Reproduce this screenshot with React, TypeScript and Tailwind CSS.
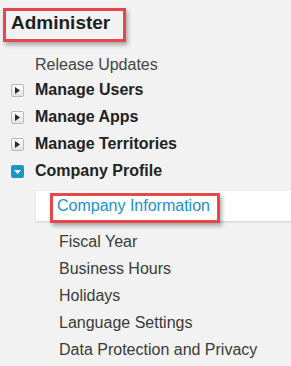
import React from "react";

const groups = ["Manage Users", "Manage Apps", "Manage Territories"];
const subItems = [
  "Fiscal Year",
  "Business Hours",
  "Holidays",
  "Language Settings",
  "Data Protection and Privacy",
];

const CollapsedIcon = () => (
  <span className="mt-[2px] flex h-[13px] w-[13px] shrink-0 items-center justify-center rounded-[2px] border border-[#b9b9b9] bg-gradient-to-b from-white to-[#e2e2e2]">
    <svg width="5" height="7" viewBox="0 0 5 7">
      <path d="M0 0 L5 3.5 L0 7 Z" fill="#2b2b2b" />
    </svg>
  </span>
);

const ExpandedIcon = () => (
  <span className="mt-[2px] flex h-[13px] w-[13px] shrink-0 items-center justify-center rounded-[2px] bg-[#1a97c4]">
    <svg width="7" height="4" viewBox="0 0 7 4">
      <path d="M0 0 L7 0 L3.5 4 Z" fill="#ffffff" />
    </svg>
  </span>
);

export default function App() {
  return (
    <div className="h-[366px] w-[291px] overflow-hidden bg-[#f2f2f2] font-['Liberation_Sans',Arial,sans-serif] text-[16px]">
      <div className="flex items-start pl-[3px] pt-[8px]">
        <div className="h-[34px] w-[123px] border-[3px] border-[#e9464c] pl-[5px] pt-[1px] text-[19px] font-bold leading-[22px] text-[#1f1f1f] shadow-[2px_3px_4px_rgba(0,0,0,0.3)]">
          Administer
        </div>
      </div>

      <div className="mt-[9px] h-[25px] pl-[35px] leading-[27px] text-[#444444]">Release Updates</div>

      {groups.map((g) => (
        <div key={g} className="flex h-[27px] items-center gap-[11px] pl-[11px]">
          <CollapsedIcon />
          <span className="font-bold leading-[27px] text-[#222222]">{g}</span>
        </div>
      ))}

      <div className="flex h-[27px] items-center gap-[11px] pl-[11px]">
        <ExpandedIcon />
        <span className="font-bold leading-[27px] text-[#222222]">Company Profile</span>
      </div>

      <div className="ml-[36px] mt-[7px] flex h-[30px] items-start bg-white pl-[14px] pt-[2px] shadow-[0_1px_2px_rgba(0,0,0,0.15)]">
        <div className="h-[30px] border-[3px] border-[#e9464c] pl-[4px] pr-[7px] leading-[20px] text-[#1c8fcc] shadow-[2px_3px_4px_rgba(0,0,0,0.3)]">
          Company Information
        </div>
      </div>

      <div className="mt-[7px]">
        {subItems.map((s) => (
          <div key={s} className="h-[27px] pl-[59px] leading-[27px] text-[#3a3a3a]">
            {s}
          </div>
        ))}
      </div>
    </div>
  );
}
